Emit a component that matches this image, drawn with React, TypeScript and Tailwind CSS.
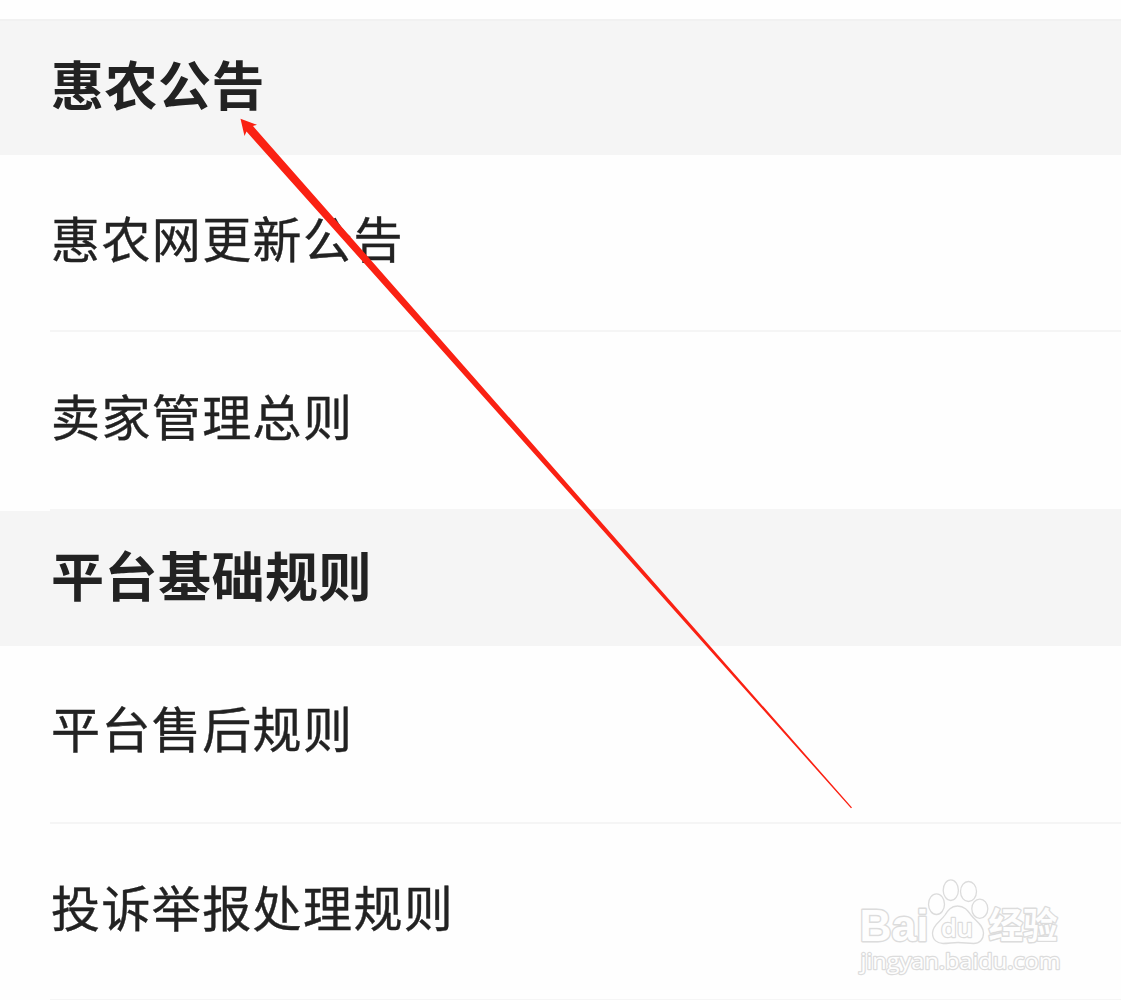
const sections = [
  {
    title: '惠农公告',
    className: 'h-[136px] border-t-2 border-[#f1f1f1] pb-[9px]',
    items: [
      { label: '惠农网更新公告', className: 'h-[177px] pb-[13px]' },
      { label: '卖家管理总则', className: 'h-[179px] pb-[13px]' }
    ]
  },
  {
    title: '平台基础规则',
    className: 'h-[135px] pb-[9px]',
    items: [
      { label: '平台售后规则', className: 'h-[178px] pb-[15px]' },
      { label: '投诉举报处理规则', className: 'h-[177px] pb-[13px]' }
    ]
  }
]

function Arrow() {
  return (
    <svg className="absolute inset-0 h-full w-full" viewBox="0 0 1121 1000">
      <path
        d="M240.5 118.8 L257 124.8 L253 126 L852 807.5 L851 808.2 L246.5 131.5 L244.5 136 Z"
        fill="#fa2113"
      />
    </svg>
  )
}

function Watermark() {
  return (
    <svg
      className="absolute left-[840px] top-[870px] h-[130px] w-[240px]"
      viewBox="0 0 240 130"
      fill="#fefefe"
      stroke="#dcdcdc"
      strokeWidth="1.3"
      strokeLinejoin="round"
    >
      <g
        className="font-['Liberation_Sans','Noto_Sans_CJK_SC',sans-serif] font-bold"
        paintOrder="stroke"
        strokeWidth="2.8"
      >
        <text x="19.5" y="71" fontSize="45" textLength="69" lengthAdjust="spacingAndGlyphs">Bai</text>
        <text x="148.5" y="68.5" fontSize="36" textLength="69" lengthAdjust="spacingAndGlyphs">经验</text>
      </g>
      <ellipse cx="96.5" cy="34.2" rx="8" ry="10.3" />
      <ellipse cx="110.8" cy="20.2" rx="7.6" ry="10.3" />
      <ellipse cx="128.5" cy="21.5" rx="8" ry="10" />
      <ellipse cx="139.8" cy="38.7" rx="8" ry="9.6" />
      <path d="M117.5 36c-7 0-10 5-12.5 9-4 6-12.500 10-12.500 18 0 7 5 10.500 10.500 10.500 6 0 9-1 15-1s10 1 15.500 1c6 0 10-4 10-10.500 0-8-8-12-12.500-18-3-4-6.500-9-13.500-9z" />
      <g className="font-['Open_Sans','Noto_Sans',sans-serif]" paintOrder="stroke" strokeWidth="2.4">
        <text x="101" y="67" fontSize="26" fontWeight="600" textLength="32" lengthAdjust="spacingAndGlyphs">du</text>
        <text x="20.5" y="98.5" fontSize="22" fontWeight="500" textLength="200" lengthAdjust="spacingAndGlyphs">jingyan.baidu.com</text>
      </g>
    </svg>
  )
}

export default function App() {
  return (
    <main className="relative h-[1000px] w-[1121px] overflow-hidden bg-[#fefefe] pt-[19px] font-['Noto_Sans_CJK_SC',sans-serif] text-[#222]">
      {sections.map((section) => (
        <section key={section.title}>
          <h2
            className={`flex items-center bg-[#f5f5f5] pl-[51px] text-[53px] font-bold leading-none tracking-[0.5px] ${section.className}`}
          >
            {section.title}
          </h2>
          <ul className="pl-[50px]">
            {section.items.map((item) => (
              <li
                key={item.label}
                className={`flex items-center border-b-2 border-[#f5f5f5] pl-px text-[49px] leading-none tracking-[1.4px] [-webkit-text-stroke:0.4px_#222] ${item.className}`}
              >
                {item.label}
              </li>
            ))}
          </ul>
        </section>
      ))}
      <Arrow />
      <Watermark />
    </main>
  )
}
